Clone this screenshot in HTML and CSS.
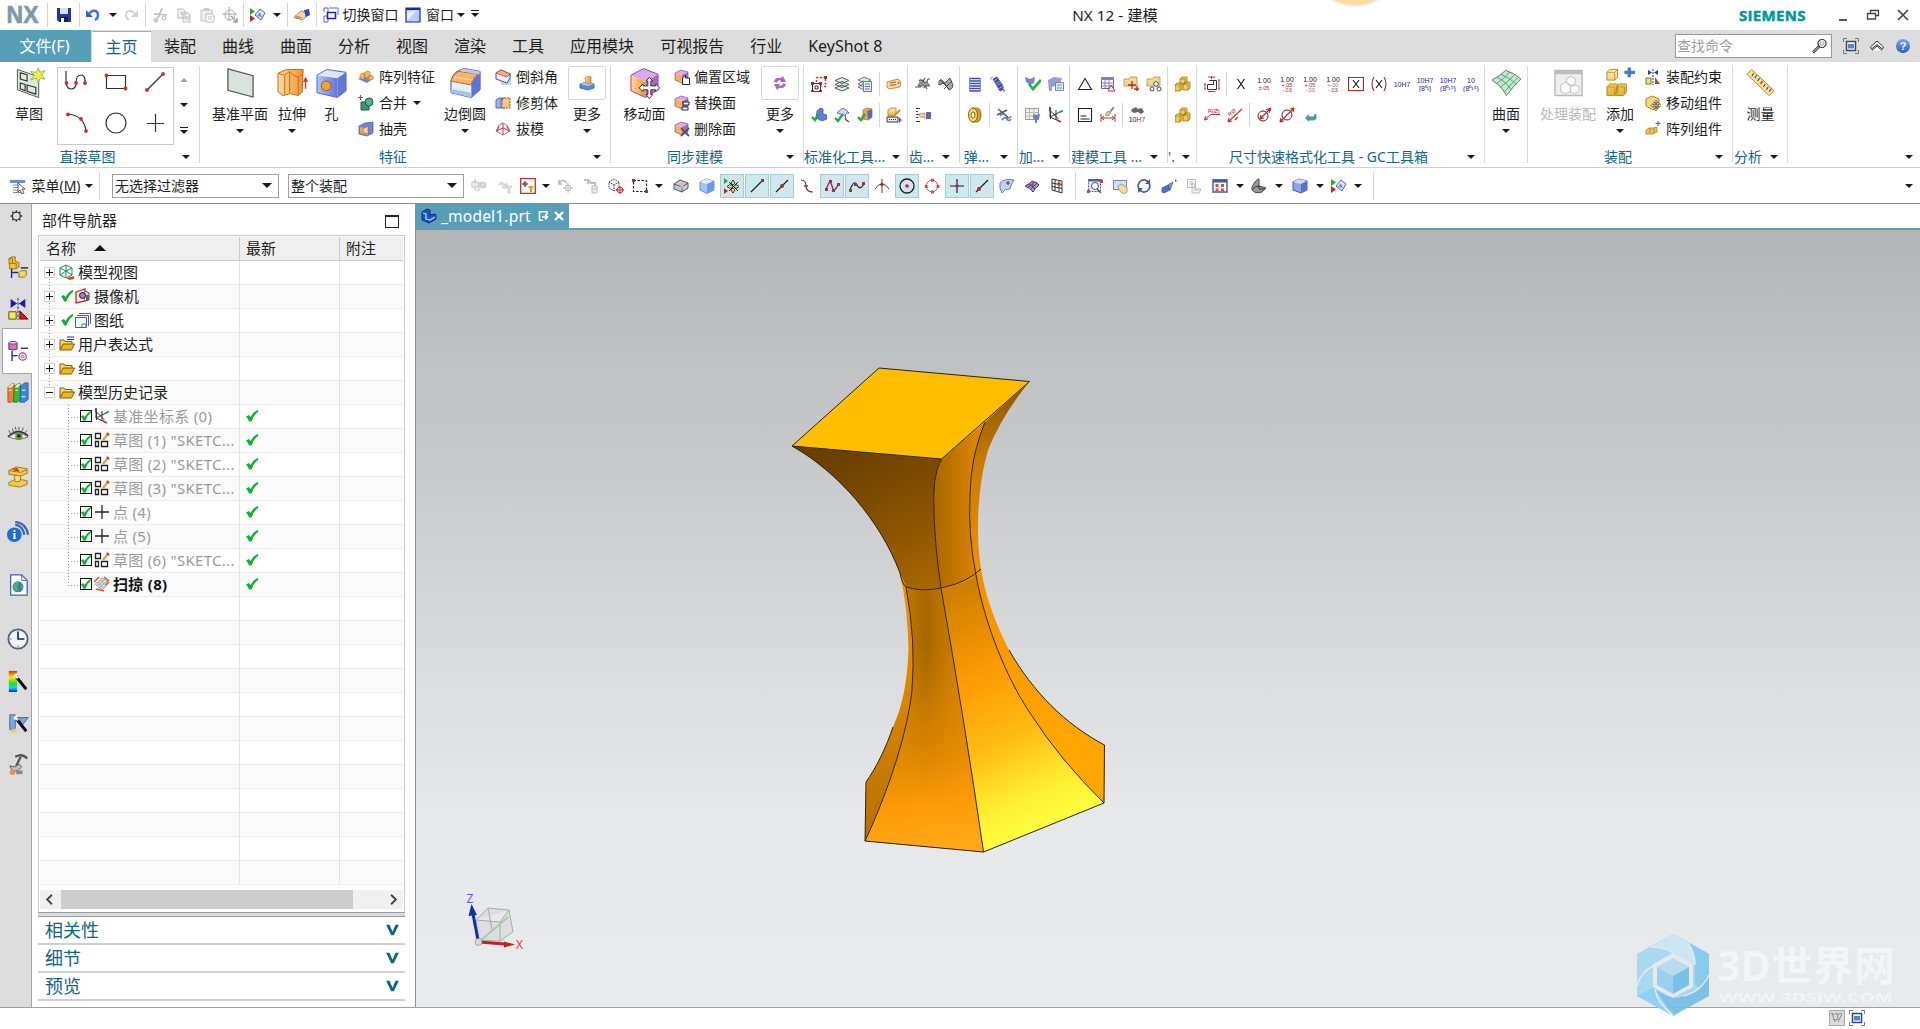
FILE: index.html
```html
<!DOCTYPE html>
<html lang="zh-CN">
<head>
<meta charset="utf-8">
<title>NX 12 - 建模</title>
<link rel="stylesheet" href="styles.css">
</head>
<body>
<svg class="sprite" aria-hidden="true">
  <defs>
    <linearGradient id="gTop" x1="0" y1="0" x2="0" y2="1"><stop offset="0" stop-color="#fff"/><stop offset="1" stop-color="#4e7fe0"/></linearGradient>
    <linearGradient id="gBlue" x1="0" y1="0" x2="1" y2="0"><stop offset="0" stop-color="#a9c6fa"/><stop offset="1" stop-color="#5f78dc"/></linearGradient>
    <linearGradient id="gOr" x1="0" y1="0" x2="1" y2="0"><stop offset="0" stop-color="#ffd89a"/><stop offset="1" stop-color="#f2942c"/></linearGradient>
    <linearGradient id="gYel" x1="0" y1="0" x2="0" y2="1"><stop offset="0" stop-color="#fff0a8"/><stop offset="1" stop-color="#e8b030"/></linearGradient>
    <linearGradient id="gRain" x1="0" y1="0" x2="0" y2="1"><stop offset="0" stop-color="#f02010"/><stop offset=".3" stop-color="#ffe800"/><stop offset=".6" stop-color="#20e020"/><stop offset=".8" stop-color="#10d0ff"/><stop offset="1" stop-color="#1020f0"/></linearGradient>
  </defs>
  <!-- quick access -->
  <symbol id="save" viewBox="0 0 16 16"><path d="M1 1h14v14H3l-2-2z" fill="#2433a8"/><path d="M4 1h8v6H4z" fill="#cfe0f8"/><path d="M4 10h8v5H4z" fill="#222"/><path d="M5 11h3v4H5z" fill="#fff"/></symbol>
  <symbol id="undo" viewBox="0 0 16 16"><path d="M1 3v7h7z" fill="#2f62c8"/><path d="M4 7c3-5 9-4 9 1 0 3-1 4-3 5" fill="none" stroke="#3f74d8" stroke-width="2.4"/></symbol>
  <symbol id="redo" viewBox="0 0 16 16"><path d="M15 3v7H8z" fill="#d4d4d4"/><path d="M12 7C9 2 3 3 3 8c0 3 1 4 3 5" fill="none" stroke="#d4d4d4" stroke-width="2"/></symbol>
  <symbol id="cut" viewBox="0 0 16 16"><path d="M10 1L6 11M2 7l13 1M5 12l-2 3" stroke="#bbb" stroke-width="1.6" fill="none"/><circle cx="12" cy="11" r="2" fill="none" stroke="#bbb"/><circle cx="4" cy="13" r="2" fill="none" stroke="#bbb"/></symbol>
  <symbol id="copy" viewBox="0 0 16 16"><path d="M2 2h5l2 2v7H2zM7 6h5l2 2v7H7z" fill="#f4f4f4" stroke="#bbb"/><path d="M4 5h3M4 7h3M9 10h4M9 12h4" stroke="#bbb"/></symbol>
  <symbol id="paste" viewBox="0 0 16 16"><path d="M2 3h11v11H2z" fill="#eee" stroke="#c4c4c4"/><path d="M5 1h5v3H5z" fill="#ccc"/><path d="M7 7h6l2 2v6H7z" fill="#fff" stroke="#bbb"/><path d="M9 10h4M9 12h4" stroke="#bbb"/></symbol>
  <symbol id="target" viewBox="0 0 16 16"><circle cx="8" cy="8" r="5" fill="none" stroke="#aaa"/><path d="M7 0v14M0 7h15" stroke="#aaa"/><path d="M9 9l6 6M11 15h4v-4" stroke="#999" stroke-width="1.4" fill="none"/></symbol>
  <symbol id="roles" viewBox="0 0 16 16"><path d="M0 1l5 3.500-5 3.500z" fill="#22b422"/><path d="M0 8l5 3.500L0 15z" fill="#d02020"/><path d="M5 8l5-6 5 4-4 7z" fill="#dde4ff" stroke="#5064b8"/><path d="M7 9l3-4 2 5z" fill="#7a8bd8"/></symbol>
  <symbol id="hand" viewBox="0 0 16 16"><path d="M0 10l7-6 4 1 1 5-4 3z" fill="#f6d9a0" stroke="#9a7a50" stroke-width=".8"/><path d="M10 3l5-1 1 6-4 2z" fill="#2c48c0"/><path d="M2 9l6 2M1 11h5" stroke="#8a6a40" stroke-width=".7"/></symbol>
  <symbol id="swwin" viewBox="0 0 16 16"><path d="M6 1h9v7M1 5V1h4v5M1 9h4v6H1z" fill="none" stroke="#5a6cb0"/><path d="M4.500 5.500h8v6h-8z" fill="#fff" stroke="#1428c8" stroke-width="1.600"/></symbol>
  <symbol id="win" viewBox="0 0 16 16"><path d="M1 1h14v14H1z" fill="#b8ccf4" stroke="#1428b8" stroke-width="1.200"/><path d="M2 14V5l10-2z" fill="#fff" opacity=".7"/><path d="M1 1h14v2H1z" fill="#1428b8"/></symbol>
  <symbol id="min" viewBox="0 0 16 16"><path d="M4 13h8" stroke="#444" stroke-width="1.800"/></symbol>
  <symbol id="restore" viewBox="0 0 16 16"><path d="M5.500 6V3.500h8v5H10M2.500 6.500h8v5.500h-8z" fill="none" stroke="#444" stroke-width="1.300"/></symbol>
  <symbol id="close" viewBox="0 0 16 16"><path d="M3 3l10 10M13 3L3 13" stroke="#444" stroke-width="1.700"/></symbol>
  <symbol id="mag" viewBox="0 0 16 16"><circle cx="10" cy="5.500" r="4" fill="none" stroke="#333" stroke-width="1.200"/><circle cx="10" cy="5.500" r="1.800" fill="none" stroke="#777" stroke-width=".7"/><path d="M7 8.500l-6 6" stroke="#333" stroke-width="2.600"/><path d="M6.500 9l-5 5" stroke="#fff" stroke-width=".9"/></symbol>
  <symbol id="full" viewBox="0 0 16 16"><path d="M.5 4V.5H4M12 .5h3.500V4M15.500 12v3.500H12M4 15.500H.5V12" fill="none" stroke="#777"/><path d="M3.500 3.500h9v9h-9z" fill="#fff" stroke="#3c465c" stroke-width="1.500"/><path d="M5 6h6v4.500H5z" fill="#4a86dc"/></symbol>
  <symbol id="chev" viewBox="0 0 16 16"><path d="M1.500 9L8 3l6.500 6-1 2L8 6.500 2.500 11zM3 12.500L8 8l5 4.500" fill="#fff" stroke="#333"/></symbol>
  <!-- large ribbon icons -->
  <symbol id="sketch" viewBox="0 0 32 32"><path d="M3.500 2l22 7.500V31l-22-8z" fill="#dfeade" stroke="#555"/><path d="M6.500 5.500l7 2v6.500l-7-2zM6.500 16l5 1.500v6.500l-5-2zM13.500 18l9 2.500v7l-9-3z" fill="none" stroke="#333" stroke-width="1.200"/><path d="M25 0l2 5 5-2-3 5 3 4-5-1-2 5-2-5-6 2 4-5-4-4 6 1z" fill="#f8ee30" stroke="#5aa0b0" stroke-width=".7"/></symbol>
  <symbol id="plane" viewBox="0 0 32 32"><path d="M3 1.500l26 7v22l-26-7z" fill="#d9e3dc" stroke="#555" stroke-width="1.300"/></symbol>
  <symbol id="extrude" viewBox="0 0 32 32"><path d="M1 6l9-4h17l-1 23-4 4-8-2-8 2-5-4z" fill="url(#gOr)" stroke="#b86a18"/><path d="M1 6l7 2 5-4 4 4 5 2 4-3M8 8v20M13 5v21M22 10v18" fill="none" stroke="#c07020"/><path d="M29.500 22V12M27.500 15l2-4 2 4" stroke="#d03030" fill="none" stroke-width="1.400"/></symbol>
  <symbol id="hole" viewBox="0 0 32 32"><path d="M1 8l10-6 20 3-9 6z" fill="#dbe8fc"/><path d="M1 8l21 3v20L1 26z" fill="url(#gBlue)"/><path d="M22 11l9-6v19l-9 7z" fill="#6478dc"/><path d="M1 8l10-6 20 3v19l-9 7-21-5z" fill="none" stroke="#5264c4"/><circle cx="10.500" cy="19" r="5" fill="#f6a428" stroke="#a05a10"/></symbol>
  <symbol id="blend" viewBox="0 0 32 32"><path d="M1 14Q3 6 9 3l6-2 16 3v19l-9 8-21-5z" fill="#e6effc" stroke="#34469c"/><path d="M1 13Q4 6 9 4l20 3q-6 3-7 11L1 14z" fill="#f8b468" stroke="#d06020"/><path d="M5 10l19 3" stroke="#ffe0b0"/><path d="M9 3l6-2 16 3-3 3z" fill="#b8c8f4"/><path d="M22 18q1-7 9-12v17l-9 8z" fill="#6074d8"/><path d="M1 22l21 4v5L1 26z" fill="#a8c4f4"/></symbol>
  <symbol id="moveface" viewBox="0 0 32 32"><path d="M2 8l13-7 15 6-13 8z" fill="#dcaaec"/><path d="M2 8l15 7v16L2 24z" fill="url(#gOr)"/><path d="M17 15l13-8v16l-13 8z" fill="#a86ac8"/><path d="M2 8l13-7 15 6v16l-13 8L2 24z" fill="none" stroke="#8a4a9a"/><path d="M21 10l3.500 4h-2v5h5v-2l4 4-4 4v-2h-5v5h2L21 32l-3.500-4h2v-5h-5v2l-4-4 4-4v2h5v-5h-2z" fill="#fff" stroke="#333"/></symbol>
  <symbol id="surf" viewBox="0 0 32 32"><path d="M1 13Q9 9 15 3q8 2 16 9-8 7-15 17-5-10-15-16z" fill="#c6e6d2" stroke="#3c8a60"/><path d="M5 17Q13 12 19 5M9 21Q17 15 24 8M13 26q8-9 14-15M6 10q9 4 15 13M10 7q10 4 16 10" fill="none" stroke="#4a9a70" stroke-width=".9"/></symbol>
  <symbol id="procasm" viewBox="0 0 32 32"><path d="M2 3h28v26H2z" fill="#efefef" stroke="#bbb" stroke-width="1.500"/><path d="M2 3h28v4H2z" fill="#bdbdbd"/><path d="M8 18l5-3 5 3v7l-5 2-5-2zM14 11l5-2 4 3v5l-5 2-4-3zM18 20l5-2 4 2v5l-5 2-4-2z" fill="#fafafa" stroke="#c0c0c0"/></symbol>
  <symbol id="addcomp" viewBox="0 0 32 32"><path d="M2 5l3-3h8v8l-3 3H2zM2 20l3-3h8v8l-3 4H2zM12 20l3-3h7v8l-3 4h-8z" fill="url(#gYel)" stroke="#b08828"/><path d="M2 5h8v8M10 5l3-3M2 20h8v8M12 20h8v8" fill="none" stroke="#b08828" stroke-width=".8"/><path d="M25 0v10M20 5h11" stroke="#3d78dc" stroke-width="3.400"/></symbol>
  <symbol id="ruler" viewBox="0 0 32 32"><path d="M7 2L2 7l23 22 5-5z" fill="#f8e28c" stroke="#b08a30"/><path d="M9 6l-2 3M12 8l-2 3M15 11l-2 3M21 17l-2 3M24 20l-2 3M27 22l-2 3" stroke="#3050a0" stroke-width="1.200"/><path d="M18 14l-2 3" stroke="#d02020" stroke-width="1.500"/></symbol>
  <symbol id="pad" viewBox="0 0 16 16"><path d="M1 9l6-2 8 2v4l-6 2-8-2z" fill="#5c8ae0" stroke="#3a58b0" stroke-width=".8"/><path d="M1 9l8 2 6-2-8-2z" fill="#a8c8fa"/><path d="M6 3l3-2 3 1v6q-3 2-5 0z" fill="url(#gOr)" stroke="#c07828" stroke-width=".7"/></symbol>
  <symbol id="swap" viewBox="0 0 16 16"><path d="M2 7q1-5 7-4l2-2 3 6-6 0 1-1.500q-3-1-4 2zM14 9q-1 5-7 4l-2 2-3-6 6 0-1 1.500q3 1 4-2z" fill="#a868c8"/></symbol>
  <!-- gallery -->
  <symbol id="profile" viewBox="0 0 26 26"><path d="M2 2v9q0 9 5 9t5-6q0-8 5-8t4 10" fill="none" stroke="#333" stroke-width="1.200"/><circle cx="2.500" cy="14" r="1.900" fill="#c83030"/><circle cx="12" cy="14" r="1.900" fill="#c83030"/><circle cx="21" cy="14" r="1.900" fill="#c83030"/></symbol>
  <symbol id="rect" viewBox="0 0 26 26"><path d="M3.500 6.500h19v13h-19z" fill="none" stroke="#333" stroke-width="1.200"/><circle cx="3.500" cy="6.500" r="1.900" fill="#c83030"/><circle cx="22.500" cy="19.500" r="1.900" fill="#c83030"/></symbol>
  <symbol id="line" viewBox="0 0 26 26"><path d="M5 21L21 5" stroke="#333" stroke-width="1.200"/><circle cx="5" cy="21" r="1.900" fill="#c83030"/><circle cx="21" cy="5" r="1.900" fill="#c83030"/></symbol>
  <symbol id="arc" viewBox="0 0 26 26"><path d="M3 4q17 1 19 17" fill="none" stroke="#333" stroke-width="1.200"/><circle cx="4" cy="4.500" r="1.900" fill="#c83030"/><circle cx="17" cy="9" r="1.900" fill="#c83030"/><circle cx="22" cy="21" r="1.900" fill="#c83030"/></symbol>
  <symbol id="circ" viewBox="0 0 26 26"><circle cx="13" cy="13" r="10" fill="none" stroke="#333" stroke-width="1.200"/></symbol>
  <symbol id="plus" viewBox="0 0 26 26"><path d="M13.500 4v18M5 13.500h17" stroke="#333" stroke-width="1.200"/></symbol>
  <!-- 16px ribbon icons -->
  <symbol id="patf" viewBox="0 0 16 16"><path d="M0 10l7-3 9 2-7 5z" fill="#5c88e0"/><path d="M2 6l2-2 3 1v4l-3 1-2-1zM6 4l3-2 3 1v5l-3 1-3-1zM10 7l2-1 3 1v3l-3 1-2-1z" fill="#f8b860" stroke="#c8782c" stroke-width=".7"/></symbol>
  <symbol id="unite" viewBox="0 0 16 16"><path d="M3 7h8v8H3z" fill="#3c9474" stroke="#1c5c44"/><circle cx="11" cy="7" r="4" fill="#58b090" stroke="#1c5c44"/><path d="M2.500 0v5M0 2.500h5" stroke="#d02c2c"/></symbol>
  <symbol id="shell" viewBox="0 0 16 16"><path d="M1 5l6-3 8-1v11l-6 3-8-2z" fill="#6c84dc" stroke="#4454a8" stroke-width=".7"/><path d="M2 6l8 2v6l-8-2z" fill="#f6a84c"/><path d="M5 8l5-3v8l-5-2z" fill="#ffd9a0" stroke="#b86820" stroke-width=".7"/></symbol>
  <symbol id="chamfer" viewBox="0 0 16 16"><path d="M6 4h10v12H6z" fill="#bcd4f8"/><path d="M1 4l5-3 9 4v4l-3 5-11-4z" fill="#eef" stroke="#34468c" stroke-width=".9"/><path d="M1 4l11 4 3-3-9-4z" fill="#f4b090" stroke="#c04028" stroke-width=".8"/></symbol>
  <symbol id="trim" viewBox="0 0 16 16"><path d="M1 5l3-2h6v10H1z" fill="url(#gBlue)" stroke="#34468c" stroke-width=".8"/><path d="M7 5l2-2h6v10H7z" fill="#ffc880" stroke="#b04020" stroke-width="1" stroke-dasharray="2 1"/></symbol>
  <symbol id="draft" viewBox="0 0 16 16"><path d="M1 10l3-6 4-2 4 2 3 6-7 4z" fill="#eef2fc" stroke="#68a" stroke-width=".9"/><path d="M1 10l7-3 7 3M8 2v12M4 5l-2 6M12 5l2 6" fill="none" stroke="#d03838" stroke-width="1"/></symbol>
  <symbol id="fbase" viewBox="0 0 16 16"><path d="M1 4l6-3 7 2-6 3z" fill="#dcaaec"/><path d="M1 4l7 2v8l-7-3z" fill="#f8b050"/><path d="M8 6l6-3v8l-6 3z" fill="#a86ac8"/><path d="M1 4l6-3 7 2v8l-6 3-7-3z" fill="none" stroke="#8a4a9a" stroke-width=".7"/></symbol>
  <symbol id="foff" viewBox="0 0 16 16"><use href="#fbase"/><path d="M8.500 15.500V9l3-3v3h4v6.500z" fill="#fff" stroke="#222"/></symbol>
  <symbol id="frep" viewBox="0 0 16 16"><use href="#fbase"/><path d="M9 7h6v3H9zM8 12h6v3H8z" fill="#fff" stroke="#222"/></symbol>
  <symbol id="fdel" viewBox="0 0 16 16"><use href="#fbase"/><path d="M7 7l8 8M15 7l-8 8" stroke="#555" stroke-width="1.800"/></symbol>
  <symbol id="std1" viewBox="0 0 16 16"><path d="M5.500 1.500h9v9h-4M5.500 6V1.500" fill="none" stroke="#c03030" stroke-dasharray="2 1.500" stroke-width="1.500"/><path d="M1.500 7.500h8v8h-8zM4 10h3v3H4z" fill="#fff" stroke="#333"/><path d="M0 6h3v3H0zM8 6h3v3H8zM0 14h3v2H0zM8 14h3v2H8zM13 0h3v3h-3z" fill="#a82828"/></symbol>
  <symbol id="layers" viewBox="0 0 16 16"><path d="M1 12l7-3 7 3-7 3zM1 8.500l7-3 7 3-7 3zM1 4.500l7-3 7 3-7 3z" fill="#dff0e4" stroke="#444" stroke-width=".9"/></symbol>
  <symbol id="layers2" viewBox="0 0 16 16"><path d="M1 11l5-3 6 3-5 3zM1 8l5-3 6 3-5 3zM1 4l6-3 7 3-6 3z" fill="#d4ecdc" stroke="#555" stroke-width=".8"/><path d="M6.500 5.500h8v10h-8z" fill="#e4ecfc" stroke="#667cc0"/><path d="M8 8h5M8 10.500h5M8 13h5" stroke="#667cc0"/></symbol>
  <symbol id="tag" viewBox="0 0 16 16"><path d="M1 6l11-3 3 3-1 5-11 2-2-2z" fill="#fad898" stroke="#b88434" stroke-width=".9"/><path d="M4 7l6-1M4 9.500l6-1" stroke="#a06a24"/><circle cx="12.500" cy="7" r="1" fill="#a06a24"/></symbol>
  <symbol id="ckA" viewBox="0 0 16 16"><path d="M6 4l3-3 3 1v5l4 1v4l-5 2-6-3z" fill="#5c80dc" stroke="#3c50a8" stroke-width=".7"/><path d="M1 10l3 3 4-6" fill="none" stroke="#28a838" stroke-width="2.400"/></symbol>
  <symbol id="ckB" viewBox="0 0 16 16"><path d="M3 6Q8 0 11 2l4 4q-5-1-3 6-1-5-6-5z" fill="#cdd8f6" stroke="#3c50a8" stroke-width=".8"/><path d="M1 11l3 3 5-7" fill="none" stroke="#28a838" stroke-width="2.400"/><path d="M11 12l4 3" stroke="#446" stroke-width="1.300"/></symbol>
  <symbol id="ckC" viewBox="0 0 16 16"><path d="M6 3l4-2 5 1v8l-4 3-5-1z" fill="#f0a838" stroke="#a86c18" stroke-width=".7"/><path d="M10 4l5-2v8l-4 3z" fill="#4c6cd4"/><path d="M1 10l3 3 4-6" fill="none" stroke="#28a838" stroke-width="2.400"/></symbol>
  <symbol id="attr" viewBox="0 0 16 16"><path d="M2 3l3-2h5v6l-2 2H2z" fill="url(#gYel)" stroke="#a08020" stroke-width=".8"/><path d="M1 10h11v5H1z" fill="#eef" stroke="#333"/><path d="M3 12.500h7" stroke="#333" stroke-dasharray="1 1"/><path d="M8 9l6-6" stroke="#d09030" stroke-width="2"/><path d="M13 10l3 3-3 3z" fill="#b040b0"/></symbol>
  <symbol id="gear1" viewBox="0 0 16 16"><path d="M0 11h5l5-9M4 5q2-2 4 0l4 8M9 12l4-9h2" fill="none" stroke="#555" stroke-width="1.200"/><path d="M5 6h7l3 4H3z" fill="#999" stroke="#444" stroke-width=".7"/></symbol>
  <symbol id="gear2" viewBox="0 0 16 16"><path d="M1 5q2-3 4 0l6 9q4-1 4-5l-3-7-4 4-7 3z" fill="#aaa" stroke="#444" stroke-width=".9"/><path d="M2 4l9 9M6 13l8-8" stroke="#333" stroke-width=".8"/></symbol>
  <symbol id="gear3" viewBox="0 0 16 16"><path d="M1 1.500h4M1 4.500h2M1 7.500h3M1 10.500h2M1 14.500h4" stroke="#333" stroke-width="1.200"/><path d="M4 7l6-1v5l-5-1z" fill="#f4c8a0" stroke="#a87850" stroke-width=".6"/><path d="M11 5h5v7h-5z" fill="#5a68b8"/></symbol>
  <symbol id="spring" viewBox="0 0 16 16"><path d="M2.500 2.500h11M2.500 5h11M2.500 7.500h11M2.500 10h11M2.500 12.500h11M2.500 15h11" stroke="#3c4ca8" stroke-width="1.700"/><path d="M2.500 2v13M13.500 2v13" stroke="#7c8ce0"/></symbol>
  <symbol id="spring2" viewBox="0 0 16 16"><path d="M3 3l4-2 6 9q1 4-3 5z" fill="#4454b4" stroke="#2c3884" stroke-width=".8"/><path d="M1 4q-1-3 2-3M4 5l4-3M5 8l5-3M6 10l5-3M8 13l5-3" stroke="#8c98e4" fill="none"/><path d="M12 13q3 0 2 3" fill="none" stroke="#4454b4"/></symbol>
  <symbol id="disc" viewBox="0 0 16 16"><path d="M8 1q6-1 6 7t-6 7H5q4-7 0-14z" fill="#c8a428" stroke="#7c6410" stroke-width=".8"/><ellipse cx="6" cy="8" rx="4.500" ry="7" fill="#f4dc60" stroke="#7c6410"/><ellipse cx="6" cy="8" rx="2" ry="3" fill="#fff" stroke="#7c6410"/></symbol>
  <symbol id="snip" viewBox="0 0 16 16"><path d="M2 2l10 8M1 8l10-5" stroke="#555" stroke-width="1.400"/><path d="M4 9q3-4 6 0t5 0M6 13q3-4 5-1t4 0" fill="none" stroke="#6474c4" stroke-width="1.500"/></symbol>
  <symbol id="mach1" viewBox="0 0 16 16"><path d="M0 1l5 2 5-2-1 6-4 2-4-3z" fill="#7884d0"/><path d="M4 8l4 5 8-9" fill="none" stroke="#28b440" stroke-width="2.800"/></symbol>
  <symbol id="mach2" viewBox="0 0 16 16"><path d="M0 4l6-3 8 1-2 6-8 3v4H1z" fill="#9c9cd4"/><path d="M7.500 6.500h8v8h-8z" fill="#dce8fc" stroke="#6878b8" stroke-width=".9"/><path d="M9 9h5M9 12h5" stroke="#6878b8" stroke-width=".8"/></symbol>
  <symbol id="mach3" viewBox="0 0 16 16"><path d="M.5 1.500h13v11H.5z" fill="#eef8d8" stroke="#999"/><path d="M.5 5.500h13M.5 9h13M4.500 2v10M9 2v10" stroke="#aaa" stroke-width=".8"/><path d="M8 7l3 1 4-1-1 5-2 1v3h-2v-3l-2-2z" fill="#7078d0"/></symbol>
  <symbol id="csys" viewBox="0 0 16 16"><path d="M2 1v9l9 4M2 10l10-5M2.500 4l8 8M2.500 4v8M8 3v10" fill="none" stroke="#333"/><path d="M2 0v4" stroke="#2038d0" stroke-width="1.600"/><path d="M11 5.500l4-2" stroke="#20a040" stroke-width="1.600"/><path d="M9 13l4 2" stroke="#d02828" stroke-width="1.600"/></symbol>
  <symbol id="tri" viewBox="0 0 16 16"><path d="M8 2.500L14.500 13.500h-13z" fill="none" stroke="#222" stroke-width="1.100"/></symbol>
  <symbol id="gridt" viewBox="0 0 16 16"><path d="M1.500 1.500h12v11h-12z" fill="#fff" stroke="#6c5ca4"/><path d="M1 1h13v3H1z" fill="#8c7cc0"/><path d="M5 2v10M9 2v10M2 7h12M2 10h12" stroke="#8c7cc0"/><path d="M11 9l4 6H8z" fill="#fff" stroke="#c83030"/></symbol>
  <symbol id="fold1" viewBox="0 0 16 16"><path d="M1 3h5l2-2h6v9H1z" fill="#ecd890" stroke="#b09840" stroke-width=".8"/><path d="M9 5v8M5 9h8M14 10v5M11 13h5" stroke="#c02020" stroke-width="1.300"/></symbol>
  <symbol id="fold2" viewBox="0 0 16 16"><path d="M1 3h5l2-2h6v9H1z" fill="#ecd890" stroke="#b09840" stroke-width=".8"/><circle cx="10" cy="8" r="2.300" fill="#fff" stroke="#444"/><circle cx="6" cy="13" r="2" fill="#fff" stroke="#444"/><circle cx="13" cy="13" r="2" fill="#fff" stroke="#444"/></symbol>
  <symbol id="note" viewBox="0 0 16 16"><path d="M1.500 1.500h13v13h-13z" fill="#fff" stroke="#222" stroke-width="1.100"/><path d="M3.500 9h6M3.500 12h9" stroke="#222"/></symbol>
  <symbol id="dimfmt" viewBox="0 0 16 16"><path d="M1 7v8M15 7v8M2 11h12M4 9l-2.500 2L4 13M12 9l2.500 2L12 13" fill="none" stroke="#c03030"/><path d="M5 8l3-4 3 2-3 3z" fill="#c8d070" stroke="#777" stroke-width=".6"/><path d="M10 5l4-5" stroke="#888" stroke-width="2"/></symbol>
  <symbol id="cubes" viewBox="0 0 16 16"><path d="M5 3l2-2h5v5l-2 2H5zM0 9l2-2h5v6l-2 2H0zM8 8l2-2h5v6l-2 2H8z" fill="#f0cc50" stroke="#987818" stroke-width=".8"/><path d="M5 3h5v5M0 9h5v6M8 8h5v6" fill="none" stroke="#987818" stroke-width=".7"/></symbol>
  <symbol id="dimx" viewBox="0 0 16 16"><path d="M5.500 4.500h4v4h-6v5h9v-9h-3" fill="none" stroke="#333"/><path d="M4 1h7M7.500 0v3M4 15.500h7M1 8v5M0 8h2M0 13h2M15 4v9M14 4h2M14 13h2" stroke="#c03030"/></symbol>
  <symbol id="X" viewBox="0 0 16 16"><path d="M4.500 3l7 10M11.500 3l-7 10" stroke="#222" stroke-width="1.300"/></symbol>
  <symbol id="Xbox" viewBox="0 0 16 16"><path d="M.5 1.500h15v13H.5z" fill="#fff" stroke="#a82828" stroke-width="1.200"/><path d="M5 4l6 8M11 4l-6 8" stroke="#222" stroke-width="1.200"/></symbol>
  <symbol id="Xpar" viewBox="0 0 16 16"><path d="M3 1Q-1 8 3 15M13 1q4 7 0 14" fill="none" stroke="#a82828" stroke-width="1.100"/><path d="M5 4l6 8M11 4l-6 8" stroke="#222" stroke-width="1.200"/></symbol>
  <symbol id="dia1" viewBox="0 0 16 16"><circle cx="7" cy="9" r="5" fill="none" stroke="#333"/><path d="M3 13L15 1M15 1l-5 2M15 1l-2 5M4 12l1-4M4 12l4-1" fill="none" stroke="#b82828" stroke-width="1.200"/></symbol>
  <symbol id="dia2" viewBox="0 0 16 16"><circle cx="8" cy="8" r="5" fill="none" stroke="#333"/><path d="M1 15L15 1M15 1l-4 1M15 1l-1 4M1 15l4-1M1 15l1-4" fill="none" stroke="#b82828" stroke-width="1.200"/></symbol>
  <symbol id="ret" viewBox="0 0 16 16"><path d="M3 11l4-4v2.500h4q2 0 1-2.500h2q2 6-3 6.500H7V15z" fill="#4c9c9c"/></symbol>
  <symbol id="constr" viewBox="0 0 16 16"><path d="M3 1l4 2.500L3 6zM13 1L9 3.500 13 6z" fill="#3038b0"/><path d="M8 0v16" stroke="#333" stroke-dasharray="2 1"/><path d="M1 9h5v6H1z" fill="#f4e478" stroke="#887020"/><path d="M10 8l5 7h-5z" fill="#d03838"/></symbol>
  <symbol id="movec" viewBox="0 0 16 16"><path d="M1 4l6-3 7 3v8l-6 3-7-4z" fill="#f8d870" stroke="#a88020"/><path d="M11 5l2 2.500h-1.500V10H14V8.500l2 2-2 2V11h-2.500v2.500H13L11 16l-2-2.500h1.500V11H8v1.500l-2-2 2-2V10h2.500V7.500H9z" fill="#fff" stroke="#333" stroke-width=".7"/></symbol>
  <symbol id="patc" viewBox="0 0 16 16"><path d="M1 9l3-2 4 0 4-1v5l-4 2H1z" fill="#f4c458" stroke="#b08428" stroke-width=".8"/><path d="M5 7v5M9 7v5" stroke="#b08428"/><path d="M13 0v5M10.500 2.500h5" stroke="#3870d8" stroke-width="1.200"/></symbol>
  <!-- selection bar -->
  <symbol id="menu" viewBox="0 0 16 16"><path d="M0 2h15v3H0z" fill="#6c8cd4"/><path d="M3 7h6M3 9.500h6M3 12h6M3 14.500h8" stroke="#888"/><path d="M8 5l7 6h-3l2 4-2 1-2-4-2 2z" fill="#fff" stroke="#333" stroke-width=".8"/></symbol>
  <symbol id="g1" viewBox="0 0 16 16"><path d="M1 4h6v5H1zM4 1v11M4 12h4V5h3" fill="none" stroke="#bbb"/><circle cx="12" cy="7" r="3" fill="#ddd" stroke="#c0c0c0"/></symbol>
  <symbol id="g2" viewBox="0 0 16 16"><path d="M1 7q4-6 7 0l2-2v5H5l2-2M9 8h6l-2 3v4h-2v-4z" fill="#ddd" stroke="#c4c4c4" stroke-width=".7"/></symbol>
  <symbol id="filt" viewBox="0 0 16 16"><path d="M.7.700h14.600v14.600H.7z" fill="#fff" stroke="#c03030" stroke-width="1.300"/><path d="M5 3v6M2 6h6" stroke="#333"/><circle cx="5" cy="6" r="1.800" fill="none" stroke="#555" stroke-width=".7"/><path d="M8 8h6l-2 3v3h-2v-3z" fill="#e8a020"/></symbol>
  <symbol id="g3" viewBox="0 0 16 16"><path d="M1 5q4-5 8 0M1 2v4h3" fill="none" stroke="#b4b4b4" stroke-width="1.400"/><circle cx="10" cy="10" r="3" fill="none" stroke="#bbb"/><path d="M10 5v10M5 10h10" stroke="#bbb"/></symbol>
  <symbol id="g4" viewBox="0 0 16 16"><path d="M1 2h4l3 3h4v3M5 2v4" fill="none" stroke="#bbb" stroke-width="1.800"/><path d="M9 8h5v7H9zM9 11h5" fill="#eee" stroke="#bbb"/></symbol>
  <symbol id="selc" viewBox="0 0 16 16"><path d="M1 4l5-3 5 3v6l-5 3-5-3zM1 4l5 3 5-3M6 7v6" fill="none" stroke="#333" stroke-dasharray="1.500 1"/><circle cx="12" cy="12" r="2.800" fill="#fff" stroke="#b82828"/><path d="M12 8v8M8 12h8" stroke="#b82828"/></symbol>
  <symbol id="marq" viewBox="0 0 16 16"><path d="M1.500 2.500h13v11h-13z" fill="none" stroke="#222" stroke-dasharray="2.500 1.500" stroke-width="1.200"/><path d="M0 1h3v3H0zM13 12h3v3h-3z" fill="#b82828"/></symbol>
  <symbol id="body1" viewBox="0 0 16 16"><path d="M1 6l6-4 8 3v5l-6 4-8-3z" fill="#c4ccd8" stroke="#555"/><path d="M1 6l8 3 6-4M9 9v5" fill="none" stroke="#556"/><path d="M6 6l6-2-3 7z" fill="#e8b0b0"/></symbol>
  <symbol id="body2" viewBox="0 0 16 16"><path d="M1 4l6-3 8 2v9l-7 3.500-7-3.500z" fill="#a4c4f8" stroke="#5a70c8" stroke-width=".8"/><path d="M1 4l7 2 7-3-8-2z" fill="#e4effc"/><path d="M8 6v9l7-3V3z" fill="#689ce8"/></symbol>
  <symbol id="snap" viewBox="0 0 16 16"><path d="M0 0l4 3-4 3z" fill="#20a830"/><path d="M0 10l4 3-4 3z" fill="#d02020"/><path d="M9 2l2 3-2 2-2-2zM9 15l2-3-2-2-2 2zM3 8.500l3-2 2 2-2 2zM15 8.500l-3-2-2 2 2 2z" fill="#f4e468" stroke="#222" stroke-width=".9"/><path d="M5 4l9 9M14 4l-9 9" stroke="#222"/></symbol>
  <symbol id="s1" viewBox="0 0 16 16"><path d="M2 14L14 2" stroke="#222" stroke-width="1.200"/><path d="M12 1h3v3h-3z" fill="#c02828"/></symbol>
  <symbol id="s2" viewBox="0 0 16 16"><path d="M2 14L14 2" stroke="#222" stroke-width="1.200"/><circle cx="8" cy="8" r="2" fill="#c02828"/></symbol>
  <symbol id="s3" viewBox="0 0 16 16"><path d="M2 2q5 0 5 6t7 6" fill="none" stroke="#444" stroke-width="1.200"/><path d="M5 8h4" stroke="#c02828" stroke-width="1.500"/></symbol>
  <symbol id="s4" viewBox="0 0 16 16"><path d="M2 11L6 3l4 10 5-7" fill="none" stroke="#8030a0" stroke-width="1.400"/><path d="M1 10h3v3H1zM5 2h3v3H5zM8 11h3v3H8zM13 5h3v3h-3z" fill="#c02828"/></symbol>
  <symbol id="s5" viewBox="0 0 16 16"><path d="M1 12Q5 1 8 7t7-1" fill="none" stroke="#333" stroke-width="1.300"/><path d="M0 11h3v3H0zM5 5h3v3H5zM13 4h3v3h-3z" fill="#c02828"/></symbol>
  <symbol id="s6" viewBox="0 0 16 16"><path d="M8 1v14M1 11Q4 6 8 6t7 5" fill="none" stroke="#444"/><circle cx="8" cy="6.500" r="1.800" fill="#c02828"/></symbol>
  <symbol id="s7" viewBox="0 0 16 16"><circle cx="8" cy="8" r="7" fill="none" stroke="#222" stroke-width="1.300"/><circle cx="8" cy="8" r="1.800" fill="#c02828"/></symbol>
  <symbol id="s8" viewBox="0 0 16 16"><circle cx="8" cy="8" r="5.800" fill="none" stroke="#777"/><path d="M7 .8h3v3H7zM7 12.500h3v3H7zM.7 7h3v3H.7zM12.500 7h3v3h-3z" fill="#d05050"/></symbol>
  <symbol id="s9" viewBox="0 0 16 16"><path d="M8 1v14M1 8h14" stroke="#222" stroke-width="1.200"/><circle cx="8" cy="8" r="1.800" fill="#c02828"/></symbol>
  <symbol id="s10" viewBox="0 0 16 16"><path d="M2 14L14 2" stroke="#222" stroke-width="1.200"/><circle cx="5" cy="11" r="2" fill="#c02828"/></symbol>
  <symbol id="s11" viewBox="0 0 16 16"><path d="M1 5q5-5 14-3-3 4-4 9-5-1-8 4-3-5-2-10z" fill="#bcd4f4" stroke="#5c7cc0"/><circle cx="9" cy="5" r="1.800" fill="#d03030"/></symbol>
  <symbol id="s12" viewBox="0 0 16 16"><path d="M1 8q5-2 7-5 5 1 7 4-4 3-6 7-3-4-8-6z" fill="#a09cd8" stroke="#3c3c70"/><path d="M3 10q5-3 7-6M6 12q4-4 7-7M4 6q5 2 7 5" fill="none" stroke="#3c3c70"/><circle cx="8" cy="7" r="1.600" fill="#d03030"/></symbol>
  <symbol id="s13" viewBox="0 0 16 16"><path d="M3 1l10 2v12L3 12zM6 2v11M10 3v11M3 5l10 2M3 8.500l10 2" fill="none" stroke="#333"/><circle cx="10" cy="6" r="1.800" fill="#d03030"/></symbol>
  <symbol id="v1" viewBox="0 0 16 16"><path d="M1.500 2.500h12v11h-12z" fill="#e4ecfc" stroke="#4860c0" stroke-dasharray="2 1"/><path d="M1 1h14v2.500H1z" fill="#4860c0"/><circle cx="8" cy="8" r="3.500" fill="#fff" stroke="#555"/><path d="M10 11l4 4" stroke="#555" stroke-width="1.500"/><path d="M13 2h3v3h-3zM0 12h3v3H0z" fill="#d04040"/></symbol>
  <symbol id="v2" viewBox="0 0 16 16"><path d="M1.500 2.500h13v9h-13z" fill="#cfe2fa" stroke="#6c84c8"/><path d="M6 8l3-2 6 3v5l-4 2-4-4z" fill="#f4d8a8" stroke="#b08850" stroke-width=".8"/></symbol>
  <symbol id="v3" viewBox="0 0 16 16"><path d="M3 11A6 6 0 0 1 9 2l4 2M13 5a6 6 0 0 1-6 9l-4-2" fill="none" stroke="#4454b0" stroke-width="1.600"/><path d="M14 1v5H9zM2 15v-5h5z" fill="#4454b0"/></symbol>
  <symbol id="v4" viewBox="0 0 16 16"><path d="M1 10l6-3 2 5-6 3-2-1z" fill="#5070d8" stroke="#3048a0" stroke-width=".7"/><path d="M7 7l5-3-3 8z" fill="#8098e8" stroke="#3048a0" stroke-width=".7"/><path d="M14 1l2 2-2 1z" fill="#d03030"/></symbol>
  <symbol id="v5" viewBox="0 0 16 16"><path d="M1.500 1.500h8v8h-8zM6 6h3v5h6l-2 4H6z" fill="#f4f4f4" stroke="#bbb"/><path d="M4 4h3M4 6h3M8 12h5" stroke="#bbb"/></symbol>
  <symbol id="v6" viewBox="0 0 16 16"><path d="M1 2h14v12H1z" fill="#fff" stroke="#3c54b8" stroke-width="1.400"/><path d="M1 1.500h14v3H1z" fill="#3c54b8"/><path d="M3.500 6h3v3h-3zM9 6h3v3H9zM3.500 10.500h3v2.500h-3zM9 10.500h3v2.500H9z" fill="#d05040"/></symbol>
  <symbol id="v7" viewBox="0 0 16 16"><path d="M1 9q4-8 7-8v7l7 2-4 4q-7 2-10-2z" fill="#999" stroke="#444"/><path d="M8 8q-4 0-6 3M8 8v3l6 0" fill="none" stroke="#333"/></symbol>
  <symbol id="v8" viewBox="0 0 16 16"><path d="M1 4l6-3 8 2v9l-6 3-8-3z" fill="#8fa4ec" stroke="#4454a8"/><path d="M1 4l8 2 6-3-8-2z" fill="#cdd8fa"/><path d="M9 6v9l6-3V3z" fill="#5c70d0"/></symbol>
  <!-- resource bar -->
  <symbol id="gearw" viewBox="0 0 24 24"><circle cx="10" cy="12" r="4.800" fill="none" stroke="#333" stroke-width="1.500"/><path d="M10 5v2M10 17v2M3 12h2M15 12h2M5 7l1.500 1.500M13.500 15.500L15 17M15 7l-1.500 1.500M6.500 15.500L5 17" stroke="#333" stroke-width="1.600"/></symbol>
  <symbol id="r1" viewBox="0 0 24 24"><path d="M2 3l3-2h4v5l4 1v5l-3 2H3z" fill="#f4c430" stroke="#907010"/><path d="M2 3h4v5h4v5M6 8h-4" fill="none" stroke="#907010"/><path d="M15 13h8" stroke="#222" stroke-width="1.500"/><path d="M5 14v10M5 18h7" stroke="#1c2890" stroke-width="1.500"/><path d="M13 18l2-2h6v5l-2 2h-6z" fill="#f8d860" stroke="#907010"/></symbol>
  <symbol id="r2" viewBox="0 0 24 24"><path d="M4 1l7 5-7 5zM20 1l-7 5 7 5z" fill="#1818c0"/><path d="M12 0v24" stroke="#222" stroke-dasharray="3 1.500"/><path d="M2 15h8v8H2z" fill="#fce840" stroke="#444"/><path d="M14 14l9 9h-9z" fill="#d81818" stroke="#600"/></symbol>
  <symbol id="r3" viewBox="0 0 24 24"><path d="M2 3q4-2 9 0v7q-5 2-9 0z" fill="#c878b0" stroke="#702060"/><ellipse cx="6.500" cy="3" rx="4.500" ry="1.500" fill="#f0c8e4" stroke="#702060" stroke-width=".8"/><path d="M15 9h8" stroke="#333" stroke-width="1.500"/><path d="M5.500 12v11M5.500 17h6" stroke="#1c2890" stroke-width="1.500"/><circle cx="17" cy="18" r="4" fill="none" stroke="#a04080" stroke-width="1.300"/><circle cx="17" cy="18" r="1.500" fill="none" stroke="#a04080"/></symbol>
  <symbol id="r4" viewBox="0 0 24 24"><path d="M1 6l4-4h3v17l-3 3H1z" fill="#e88030" stroke="#994010" stroke-width=".8"/><path d="M8 5l4-3h3v17l-4 3H7z" fill="#38b838" stroke="#186818" stroke-width=".8"/><path d="M15 5l4-4h4v18l-4 3h-5z" fill="#3c88e0" stroke="#184890" stroke-width=".8"/><path d="M1 6l4-4h3L5 6zM8 6l4-4h3l-3 4z" fill="#f8e8c0"/><path d="M2 9h3M9 9h3M16 9h4M16 16h4" stroke="#fff"/></symbol>
  <symbol id="r5" viewBox="0 0 24 24"><path d="M1 14Q12 3 23 13" fill="none" stroke="#333" stroke-width="1.800"/><path d="M2 14q10-8 21 0-11 5-21 0z" fill="#eee" stroke="#666"/><circle cx="13" cy="13.500" r="4" fill="#60a030"/><circle cx="13" cy="13" r="1.800" fill="#222"/><path d="M4 11L2 7M7 9L6 5M10 7L9 3M13 7V3M16 8l2-4M19 10l3-3" stroke="#555"/></symbol>
  <symbol id="r6" viewBox="0 0 24 24"><path d="M2 5l8-4 12 2v5l-7 3-13-2zM2 18l8-4 12 2v4l-8 3-12-2z" fill="#f4c848" stroke="#a87818"/><path d="M8 10l7 1-1 6H9z" fill="#f8dc80" stroke="#a87818"/><path d="M2 5l13 2 7-3" fill="none" stroke="#a87818"/><path d="M6 3l4 2M9 2l4 4M7 6l5-3" fill="none" stroke="#d02820" stroke-width="1.300"/></symbol>
  <symbol id="r8" viewBox="0 0 24 24"><path d="M4 1h12l6 6v16H4z" fill="#fff" stroke="#3468b8" stroke-width="1.400"/><path d="M16 1v6h6" fill="none" stroke="#3468b8"/><circle cx="12" cy="14" r="6" fill="#3878c8"/><path d="M7 12q3-5 6-3l-2 6 2 4q-6 0-6-7zM15 11l3 3-2 4z" fill="#50b848"/></symbol>
  <symbol id="r9" viewBox="0 0 24 24"><circle cx="12" cy="12" r="10.500" fill="#f0f4fc" stroke="#586078" stroke-width="2"/><path d="M12 4v8h7" fill="none" stroke="#1c2848" stroke-width="1.800"/><path d="M12 3v2M12 19v2M3 12h2" stroke="#586078"/></symbol>
  <symbol id="r10" viewBox="0 0 24 24"><path d="M2 1h9v23H2z" fill="url(#gRain)"/><path d="M9 6l12 15" stroke="#111" stroke-width="3.200"/><path d="M8 5l4 4M11 4l-3 4" stroke="#fff" stroke-width="2.500"/></symbol>
  <symbol id="r11" viewBox="0 0 24 24"><path d="M3 3h6v16H3zM12 6h11l-6 8z" fill="#78a8e0" stroke="#3868b0"/><path d="M2 20l7-2 3 3-6 2z" fill="#e8d060"/><path d="M9 6l12 15" stroke="#111" stroke-width="3.200"/><path d="M8 5l4 4M11 4l-3 4" stroke="#fff" stroke-width="2.500"/></symbol>
  <symbol id="r12" viewBox="0 0 24 24"><path d="M9 3q8-4 13 2M15 3l-5 10" stroke="#555" stroke-width="2.500" fill="none"/><path d="M3 13l6 1 4-3 3 3-4 4-6 1z" fill="#b8c0cc" stroke="#556"/><circle cx="6" cy="20" r="3" fill="#f09028"/><path d="M10 18h7v4h-7z" fill="#888"/></symbol>
  <!-- tree -->
  <symbol id="ok" viewBox="0 0 14 14"><path d="M1 7.500l3-1.500 1.500 2Q8 3 13 .8L13 3Q8 7 6.500 12.500H4Q3 9.500 1 7.500z" fill="#18b030"/></symbol>
  <symbol id="mview" viewBox="0 0 16 16"><path d="M1 4l6-3 6 3v7l-6 3-6-3zM1 4l6 3 6-3M7 7v7M7 1v6l6 4M7 7l-6 4" fill="none" stroke="#188858"/><path d="M8 14l7-2v3l-5 1z" fill="#e04020"/></symbol>
  <symbol id="cam" viewBox="0 0 16 16"><path d="M1 4l9-3v12l-9 2z" fill="#fce8e4" stroke="#d02818" stroke-width="1.300"/><path d="M10 3l4 2v7l-4 1" fill="#ddd" stroke="#444"/><circle cx="7.500" cy="7.500" r="3" fill="#8890c8" stroke="#304"/><path d="M11 7h3v5h-3z" fill="#666"/></symbol>
  <symbol id="draw" viewBox="0 0 16 16"><path d="M4 1.500h11.500V12M2 3.500h11.500V14" fill="none" stroke="#4460a8"/><path d="M.5 5.500h11v10H.5z" fill="#f2f6ff" stroke="#4460a8"/><path d="M7 12h4v3M7 12v3" stroke="#4460a8" fill="none" stroke-width=".8"/></symbol>
  <symbol id="folder" viewBox="0 0 16 16"><path d="M1 14V4h4l1 1.500h7V8" fill="#f8d868" stroke="#785c10"/><path d="M1 14L4 8h11.500l-3 6z" fill="#f4b41c" stroke="#785c10"/></symbol>
  <symbol id="folderx" viewBox="0 0 16 16"><use href="#folder"/><path d="M8 1h7M8 3.500h7" stroke="#2028a0" stroke-width="1.200"/></symbol>
  <symbol id="sk" viewBox="0 0 16 16"><path d="M1.500 1.500h5v5h-5zM1.500 9.500h3v5h-3zM7.500 9.500h6v5h-6z" fill="none" stroke="#222" stroke-width="1.300"/><path d="M9 8l5-6" stroke="#e8a030" stroke-width="2.200"/><path d="M13 1l2 2" stroke="#c03030" stroke-width="2"/></symbol>
  <symbol id="pt" viewBox="0 0 16 16"><path d="M8 1v14M1 8h14" stroke="#222" stroke-width="1.300"/></symbol>
  <symbol id="sweep" viewBox="0 0 16 16"><path d="M1 8q4-1 6-6l7 2q-1 7-6 10z" fill="#ddd" stroke="#888" stroke-width=".7"/><path d="M0 6l5-5M2 13l8 2M10 1l5 4M12 9l3-3" stroke="#e05030" stroke-width="1.500"/><path d="M3 10l8-7M5 12l8-7M4 6l6 7M7 4l5 6" stroke="#999" stroke-width=".8"/></symbol>
  <symbol id="prt" viewBox="0 0 16 16"><path d="M1 4l5-3 3 1v5l5-1 1 1v4l-7 4-7-3z" fill="#1c50c8" stroke="#103080"/><path d="M2 5l3 1 0 5 4 1 5-3" fill="none" stroke="#b8d8ff" stroke-width="1.200"/></symbol>
  <symbol id="page" viewBox="0 0 12 12"><path d="M10 4.500V1.800H2.500v8.400H6M5 7h5M8 4.500l2.500 2.500L8 9.500" fill="none" stroke="#fff" stroke-width="1.500"/></symbol>
  <symbol id="xx" viewBox="0 0 12 12"><path d="M2 2l8 8M10 2l-8 8" stroke="#fff" stroke-width="2.400"/></symbol>
  <symbol id="vchev" viewBox="0 0 16 14"><path d="M.5 1h4L8 9l3.500-8h4L9.500 13h-3z" fill="#10647c"/></symbol>
  <symbol id="flag" viewBox="0 0 16 16"><path d="M.5.500h15v15H.5z" fill="#dcdcdc" stroke="#a8a8a8"/><path d="M3 4l3 8M2 3q4 3 6 0l1 6q-3 2-5 0M9 12l4-8q-2-2-4 1" fill="none" stroke="#888"/></symbol>
</svg>

<header class="title">
  <div class="quick">
    <b class="nx">NX</b><i class="sep"></i><svg class="i"><use href="#save"/></svg><i class="sep"></i>
    <svg class="i"><use href="#undo"/></svg><i class="car"></i><svg class="i"><use href="#redo"/></svg><i class="sep"></i>
    <svg class="i"><use href="#cut"/></svg><svg class="i"><use href="#copy"/></svg><svg class="i"><use href="#paste"/></svg><svg class="i"><use href="#target"/></svg><i class="sep"></i>
    <svg class="i"><use href="#roles"/></svg><i class="car"></i><i class="sep"></i><svg class="i"><use href="#hand"/></svg><i class="sep"></i>
    <svg class="i"><use href="#swwin"/></svg><span>切换窗口</span><svg class="i"><use href="#win"/></svg><span>窗口</span><i class="car"></i><i class="car bar"></i>
  </div>
  <div class="caption">NX 12 - 建模</div>
  <div class="brand">SIEMENS</div>
  <div class="winbtns"><svg class="i"><use href="#min"/></svg><svg class="i"><use href="#restore"/></svg><svg class="i"><use href="#close"/></svg></div>
  <div class="sun"></div>
</header>

<nav class="tabs">
  <span class="file">文件(F)</span><span class="on">主页</span>
  <span>装配</span><span>曲线</span><span>曲面</span><span>分析</span><span>视图</span><span>渲染</span><span>工具</span><span>应用模块</span><span>可视报告</span><span>行业</span><span>KeyShot 8</span>
  <div class="find"><span>查找命令</span><svg class="i"><use href="#mag"/></svg></div>
  <div class="tabtools"><svg class="i"><use href="#full"/></svg><svg class="i"><use href="#chev"/></svg><span class="help">?</span></div>
</nav>

<section class="ribbon">
  <div class="grp w-sketch">
    <div class="body">
      <div class="big"><svg class="L"><use href="#sketch"/></svg><span>草图</span></div>
      <div class="gallery"><svg><use href="#profile"/></svg><svg><use href="#rect"/></svg><svg><use href="#line"/></svg><svg><use href="#arc"/></svg><svg><use href="#circ"/></svg><svg><use href="#plus"/></svg></div>
      <div class="scroll"><i class="car up"></i><i class="car"></i><i class="car bar"></i></div>
    </div>
    <div class="foot"><span>直接草图</span><i class="car"></i></div>
  </div>
  <div class="grp w-feat">
    <div class="body">
      <div class="big"><svg class="L"><use href="#plane"/></svg><span>基准平面</span><i class="car"></i></div>
      <div class="big"><svg class="L"><use href="#extrude"/></svg><span>拉伸</span><i class="car"></i></div>
      <div class="big"><svg class="L"><use href="#hole"/></svg><span>孔</span></div>
      <div class="list"><p><svg class="i"><use href="#patf"/></svg>阵列特征</p><p><svg class="i"><use href="#unite"/></svg>合并<i class="car"></i></p><p><svg class="i"><use href="#shell"/></svg>抽壳</p></div>
      <div class="big"><svg class="L"><use href="#blend"/></svg><span>边倒圆</span><i class="car"></i></div>
      <div class="list"><p><svg class="i"><use href="#chamfer"/></svg>倒斜角</p><p><svg class="i"><use href="#trim"/></svg>修剪体</p><p><svg class="i"><use href="#draft"/></svg>拔模</p></div>
      <div class="big more"><div><svg class="i"><use href="#pad"/></svg></div><span>更多</span><i class="car"></i></div>
    </div>
    <div class="foot"><span>特征</span><i class="car"></i></div>
  </div>
  <div class="grp w-sync">
    <div class="body">
      <div class="big"><svg class="L"><use href="#moveface"/></svg><span>移动面</span></div>
      <div class="list"><p><svg class="i"><use href="#foff"/></svg>偏置区域</p><p><svg class="i"><use href="#frep"/></svg>替换面</p><p><svg class="i"><use href="#fdel"/></svg>删除面</p></div>
      <div class="big more"><div><svg class="i"><use href="#swap"/></svg></div><span>更多</span><i class="car"></i></div>
    </div>
    <div class="foot"><span>同步建模</span><i class="car"></i></div>
  </div>
  <div class="grp w104">
    <div class="mini"><p><svg class="i"><use href="#std1"/></svg><svg class="i"><use href="#layers"/></svg><svg class="i"><use href="#layers2"/></svg><i class="sep"></i><svg class="i"><use href="#tag"/></svg></p>
    <p><svg class="i"><use href="#ckA"/></svg><svg class="i"><use href="#ckB"/></svg><svg class="i"><use href="#ckC"/></svg><i class="sep"></i><svg class="i"><use href="#attr"/></svg></p></div>
    <div class="foot"><span>标准化工具...</span><i class="car"></i></div>
  </div>
  <div class="grp w52">
    <div class="mini"><p><svg class="i"><use href="#gear1"/></svg><svg class="i"><use href="#gear2"/></svg></p><p><svg class="i"><use href="#gear3"/></svg></p></div>
    <div class="foot"><span>齿...</span><i class="car"></i></div>
  </div>
  <div class="grp w58">
    <div class="mini"><p><svg class="i"><use href="#spring"/></svg><svg class="i"><use href="#spring2"/></svg></p><p><svg class="i"><use href="#disc"/></svg><i class="sep"></i><svg class="i"><use href="#snip"/></svg></p></div>
    <div class="foot"><span>弹...</span><i class="car"></i></div>
  </div>
  <div class="grp w52">
    <div class="mini"><p><svg class="i"><use href="#mach1"/></svg><svg class="i"><use href="#mach2"/></svg></p><p><svg class="i"><use href="#mach3"/></svg><svg class="i"><use href="#csys"/></svg></p></div>
    <div class="foot"><span>加...</span><i class="car"></i></div>
  </div>
  <div class="grp w98">
    <div class="mini"><p><svg class="i"><use href="#tri"/></svg><svg class="i"><use href="#gridt"/></svg><svg class="i"><use href="#fold1"/></svg><svg class="i"><use href="#fold2"/></svg></p><p><svg class="i"><use href="#note"/></svg><svg class="i"><use href="#dimfmt"/></svg><i class="sep"></i><svg class="i" viewBox="0 0 16 16"><path d="M3 2l4-2 2 2 4-1 2 4-3 2-3-2-4 1-3-2z" fill="#666"/><text x="8" y="15" class="t dark">10<tspan class="red">H7</tspan></text></svg></p></div>
    <div class="foot"><span>建模工具 ...</span><i class="car"></i></div>
  </div>
  <div class="grp w29">
    <div class="mini"><p><svg class="i"><use href="#cubes"/></svg></p><p><svg class="i"><use href="#cubes"/></svg></p></div>
    <div class="foot"><span>'.</span><i class="car"></i></div>
  </div>
  <div class="grp w288">
    <div class="mini"><p><svg class="i"><use href="#dimx"/></svg><i class="sep"></i><svg class="i"><use href="#X"/></svg><svg class="i" viewBox="0 0 16 16"><text x="8" y="7" class="t dark">1.00</text><text x="8" y="14" class="s red">±.05</text></svg><svg class="i" viewBox="0 0 16 16"><text x="8" y="6" class="t dark">1.00</text><text x="8" y="11" class="s red">+.05</text><text x="8" y="16" class="s red">-.03</text></svg><svg class="i" viewBox="0 0 16 16"><text x="8" y="6" class="t dark">1.00</text><text x="8" y="11" class="s red">+.05</text><text x="8" y="16" class="s grey">-.00</text></svg><svg class="i" viewBox="0 0 16 16"><text x="8" y="6" class="t dark">1.00</text><text x="8" y="11" class="s grey">+.00</text><text x="8" y="16" class="s red">-.03</text></svg><svg class="i"><use href="#Xbox"/></svg><svg class="i"><use href="#Xpar"/></svg><svg class="i" viewBox="0 0 16 16"><text x="8" y="11" class="t blue">10H7</text></svg><svg class="i" viewBox="0 0 16 16"><text x="8" y="7" class="t blue">10H7</text><text x="8" y="15" class="t blue">[8⁰¹]</text></svg><svg class="i" viewBox="0 0 16 16"><text x="8" y="7" class="t blue">10H7</text><text x="8" y="15" class="t blue">(8⁰¹⁵)</text></svg><svg class="i" viewBox="0 0 16 16"><text x="8" y="7" class="t blue">10</text><text x="8" y="15" class="t blue">(8⁰¹⁵)</text></svg></p><p><svg class="i" viewBox="0 0 16 16"><path d="M0 13l7-5.500h9M0 13l4-1M0 13l2-4" fill="none" stroke="#c03030"/><text x="10" y="6" class="s red">R(Ø)</text></svg><svg class="i" viewBox="0 0 16 16"><path d="M1 15L15 2M1 15l4-1M1 15l1-4M8 13l3-3" fill="none" stroke="#c03030" stroke-width="1.200"/><text x="6" y="7" class="s red" transform="rotate(-38 6 7)">RØ</text></svg><i class="sep"></i><svg class="i"><use href="#dia1"/></svg><svg class="i"><use href="#dia2"/></svg><svg class="i"><use href="#ret"/></svg></p></div>
    <div class="foot"><span>尺寸快速格式化工具 - GC工具箱</span><i class="car"></i></div>
  </div>
  <div class="grp w43">
    <div class="body"><div class="big"><svg class="L"><use href="#surf"/></svg><span>曲面</span><i class="car"></i></div></div>
    <div class="foot"></div>
  </div>
  <div class="grp w-asm">
    <div class="body">
      <div class="big off"><svg class="L"><use href="#procasm"/></svg><span>处理装配</span></div>
      <div class="big"><svg class="L"><use href="#addcomp"/></svg><span>添加</span><i class="car"></i></div>
      <div class="list"><p><svg class="i"><use href="#constr"/></svg>装配约束</p><p><svg class="i"><use href="#movec"/></svg>移动组件</p><p><svg class="i"><use href="#patc"/></svg>阵列组件</p></div>
    </div>
    <div class="foot"><span>装配</span><i class="car"></i></div>
  </div>
  <div class="grp w55">
    <div class="body"><div class="big"><svg class="L"><use href="#ruler"/></svg><span>测量</span></div></div>
    <div class="foot"><span>分析</span><i class="car"></i></div>
  </div>
  <div class="grp rest"><div class="foot"><i class="car"></i></div></div>
</section>

<section class="selbar">
  <svg class="i"><use href="#menu"/></svg><span>菜单(<u>M</u>)</span><i class="car"></i><i class="sep"></i>
  <div class="combo c1"><span>无选择过滤器</span><i class="car big-c"></i></div>
  <div class="combo c2"><span>整个装配</span><i class="car big-c"></i></div>
  <svg class="i"><use href="#g1"/></svg><svg class="i"><use href="#g2"/></svg><svg class="i"><use href="#filt"/></svg><i class="car"></i>
  <svg class="i"><use href="#g3"/></svg><svg class="i"><use href="#g4"/></svg><svg class="i"><use href="#selc"/></svg><svg class="i"><use href="#marq"/></svg><i class="car"></i>
  <svg class="i"><use href="#body1"/></svg><svg class="i"><use href="#body2"/></svg>
  <svg class="i hl"><use href="#snap"/></svg><svg class="i hl"><use href="#s1"/></svg><svg class="i hl"><use href="#s2"/></svg><svg class="i"><use href="#s3"/></svg><svg class="i hl"><use href="#s4"/></svg><svg class="i hl"><use href="#s5"/></svg><svg class="i"><use href="#s6"/></svg><svg class="i hl"><use href="#s7"/></svg><svg class="i"><use href="#s8"/></svg><svg class="i hl"><use href="#s9"/></svg><svg class="i hl"><use href="#s10"/></svg><svg class="i"><use href="#s11"/></svg><svg class="i"><use href="#s12"/></svg><svg class="i"><use href="#s13"/></svg><i class="sep"></i>
  <svg class="i"><use href="#v1"/></svg><svg class="i"><use href="#v2"/></svg><svg class="i"><use href="#v3"/></svg><svg class="i"><use href="#v4"/></svg><svg class="i"><use href="#v5"/></svg><svg class="i"><use href="#v6"/></svg><i class="car"></i><svg class="i"><use href="#v7"/></svg><i class="car"></i><svg class="i"><use href="#v8"/></svg><i class="car"></i><svg class="i"><use href="#roles"/></svg><i class="car"></i><i class="sep"></i><span></span><i class="car"></i>
</section>

<main class="work">
  <aside class="rail">
    <div class="cog"><svg><use href="#gearw"/></svg></div>
    <div><svg><use href="#r1"/></svg></div><div><svg><use href="#r2"/></svg></div><div class="cur"><svg><use href="#r3"/></svg></div><div><svg><use href="#r4"/></svg></div><div><svg><use href="#r5"/></svg></div><div><svg><use href="#r6"/></svg></div>
    <div class="gap13"><svg viewBox="0 0 24 24"><circle cx="8" cy="15" r="8" fill="#1c70cc"/><text x="8" y="20" class="info">i</text><path d="M9 4q8 1 10 11M9 1q12 1 14 14" fill="none" stroke="#3868b8" stroke-width="2.400"/></svg></div><div class="gap11"><svg><use href="#r8"/></svg></div><div class="gap12"><svg><use href="#r9"/></svg></div><div><svg><use href="#r10"/></svg></div><div><svg><use href="#r11"/></svg></div><div><svg><use href="#r12"/></svg></div>
  </aside>
  <aside class="panel">
    <div class="ptitle"><span>部件导航器</span><i class="maxbox"></i></div>
    <div class="tree">
      <div class="row head"><span>名称<i class="asc"></i></span><span>最新</span><span>附注</span></div>
      <div class="row top first"><span><i class="ex p"></i><svg class="i"><use href="#mview"/></svg>模型视图</span><span></span><span></span></div>
      <div class="row top"><span><i class="ex p"></i><svg class="ok"><use href="#ok"/></svg><svg class="i"><use href="#cam"/></svg>摄像机</span><span></span><span></span></div>
      <div class="row top"><span><i class="ex p"></i><svg class="ok"><use href="#ok"/></svg><svg class="i"><use href="#draw"/></svg>图纸</span><span></span><span></span></div>
      <div class="row top"><span><i class="ex p"></i><svg class="i"><use href="#folderx"/></svg>用户表达式</span><span></span><span></span></div>
      <div class="row top"><span><i class="ex p"></i><svg class="i"><use href="#folder"/></svg>组</span><span></span><span></span></div>
      <div class="row top lastt"><span><i class="ex"></i><svg class="i"><use href="#folder"/></svg>模型历史记录</span><span></span><span></span></div>
      <div class="row kid"><span><b class="cb"><svg class="ok"><use href="#ok"/></svg></b><svg class="i"><use href="#csys"/></svg>基准坐标系 (0)</span><span><svg class="ok"><use href="#ok"/></svg></span><span></span></div>
      <div class="row kid"><span><b class="cb"><svg class="ok"><use href="#ok"/></svg></b><svg class="i"><use href="#sk"/></svg>草图 (1) "SKETC...</span><span><svg class="ok"><use href="#ok"/></svg></span><span></span></div>
      <div class="row kid"><span><b class="cb"><svg class="ok"><use href="#ok"/></svg></b><svg class="i"><use href="#sk"/></svg>草图 (2) "SKETC...</span><span><svg class="ok"><use href="#ok"/></svg></span><span></span></div>
      <div class="row kid"><span><b class="cb"><svg class="ok"><use href="#ok"/></svg></b><svg class="i"><use href="#sk"/></svg>草图 (3) "SKETC...</span><span><svg class="ok"><use href="#ok"/></svg></span><span></span></div>
      <div class="row kid"><span><b class="cb"><svg class="ok"><use href="#ok"/></svg></b><svg class="i"><use href="#pt"/></svg>点 (4)</span><span><svg class="ok"><use href="#ok"/></svg></span><span></span></div>
      <div class="row kid"><span><b class="cb"><svg class="ok"><use href="#ok"/></svg></b><svg class="i"><use href="#pt"/></svg>点 (5)</span><span><svg class="ok"><use href="#ok"/></svg></span><span></span></div>
      <div class="row kid"><span><b class="cb"><svg class="ok"><use href="#ok"/></svg></b><svg class="i"><use href="#sk"/></svg>草图 (6) "SKETC...</span><span><svg class="ok"><use href="#ok"/></svg></span><span></span></div>
      <div class="row kid end"><span><b class="cb"><svg class="ok"><use href="#ok"/></svg></b><svg class="i"><use href="#sweep"/></svg>扫掠 (8)</span><span><svg class="ok"><use href="#ok"/></svg></span><span></span></div>
      <div class="row"><span></span><span></span><span></span></div><div class="row"><span></span><span></span><span></span></div><div class="row"><span></span><span></span><span></span></div><div class="row"><span></span><span></span><span></span></div><div class="row"><span></span><span></span><span></span></div><div class="row"><span></span><span></span><span></span></div><div class="row"><span></span><span></span><span></span></div><div class="row"><span></span><span></span><span></span></div><div class="row"><span></span><span></span><span></span></div><div class="row"><span></span><span></span><span></span></div><div class="row"><span></span><span></span><span></span></div><div class="row"><span></span><span></span><span></span></div>
      <div class="hbar"><svg viewBox="0 0 20 20"><path d="M12 5l-5 5 5 5" fill="none" stroke="#444" stroke-width="2"/></svg><i></i><svg viewBox="0 0 20 20"><path d="M8 5l5 5-5 5" fill="none" stroke="#444" stroke-width="2"/></svg></div>
    </div>
    <div class="splitter"></div>
    <div class="fold"><span>相关性</span><svg><use href="#vchev"/></svg></div>
    <div class="fold"><span>细节</span><svg><use href="#vchev"/></svg></div>
    <div class="fold"><span>预览</span><svg><use href="#vchev"/></svg></div>
  </aside>
  <section class="doc">
    <div class="doctabs"><div class="doctab"><svg class="i"><use href="#prt"/></svg><span>_model1.prt</span><svg class="pg"><use href="#page"/></svg><svg class="pg"><use href="#xx"/></svg></div></div>
    <svg class="scene" viewBox="416 230 1504 777">
      <defs>
        <linearGradient id="fL" x1="850" y1="450" x2="915" y2="590" gradientUnits="userSpaceOnUse"><stop offset="0" stop-color="#6a4000"/><stop offset=".5" stop-color="#855000"/><stop offset="1" stop-color="#a86600"/></linearGradient>
        <linearGradient id="fM" x1="936" y1="0" x2="978" y2="0" gradientUnits="userSpaceOnUse"><stop offset="0" stop-color="#ad6900"/><stop offset=".5" stop-color="#c47600"/><stop offset="1" stop-color="#dc8600"/></linearGradient>
        <linearGradient id="fR" x1="0" y1="390" x2="0" y2="740" gradientUnits="userSpaceOnUse"><stop offset="0" stop-color="#8f5800"/><stop offset=".2" stop-color="#c77a00"/><stop offset=".5" stop-color="#f08f00"/><stop offset="1" stop-color="#ffa600"/></linearGradient>
        <linearGradient id="fS" x1="0" y1="590" x2="0" y2="840" gradientUnits="userSpaceOnUse"><stop offset="0" stop-color="#f09000"/><stop offset=".45" stop-color="#d88400"/><stop offset="1" stop-color="#b87000"/></linearGradient>
        <linearGradient id="fBL" x1="905" y1="640" x2="965" y2="640" gradientUnits="userSpaceOnUse"><stop offset="0" stop-color="#c07800"/><stop offset=".35" stop-color="#a86800"/><stop offset="1" stop-color="#d88600"/></linearGradient>
        <linearGradient id="fBL2" x1="925" y1="650" x2="950" y2="845" gradientUnits="userSpaceOnUse"><stop offset="0" stop-color="#e08a00" stop-opacity="0"/><stop offset=".5" stop-color="#e88c00" stop-opacity=".75"/><stop offset=".8" stop-color="#ff9c08"/><stop offset="1" stop-color="#ffa818"/></linearGradient>
        <linearGradient id="fBR" x1="945" y1="600" x2="1050" y2="830" gradientUnits="userSpaceOnUse"><stop offset="0" stop-color="#d08000"/><stop offset=".35" stop-color="#ff9d04"/><stop offset=".6" stop-color="#ffbb14"/><stop offset=".85" stop-color="#fff034"/><stop offset="1" stop-color="#ffff40"/></linearGradient>
      </defs>
      <g stroke-linejoin="round">
        <path d="M1029.500 381.500Q1002 415 988 450 978 485 978 527C978 572 987 606 1009 650 1033 692 1065 724 1104.500 745L1104 803Q1060 760 1030 713C1000 668 982 610 976 575Q968 535 970 495C971 465 976 445 985 422z" fill="url(#fR)"/>
        <path d="M941.500 459L985 422C976 445 971 465 970 495Q968 535 976 575 960 586 941 588C937 560 935 540 934 512Q932 475 941.500 459z" fill="url(#fM)"/>
        <path d="M792 446C838 472 880 520 900 573L906 587Q922 592 941 588C937 560 935 540 934 512Q932 475 941.500 459z" fill="url(#fL)"/>
        <path d="M900 573Q908 610 908.500 650C907 685 902 707 893 727 886 748 876 768 866 782L865 841C889 790 908 730 912 690Q916 640 906 587z" fill="url(#fS)"/>
        <path d="M906 587Q916 640 912 690C908 730 889 790 865 841L983.500 852Q966 730 941 588 922 592 906 587z" fill="url(#fBL)"/>
        <path d="M906 587Q916 640 912 690C908 730 889 790 865 841L983.500 852Q966 730 941 588 922 592 906 587z" fill="url(#fBL2)"/>
        <path d="M941 588Q966 730 983.500 852L1104 803Q1060 760 1030 713C1000 668 982 610 976 575 960 586 941 588 941 588z" fill="url(#fBR)"/>
        <path d="M879 368l150.500 13.500L941.500 459 792 446z" fill="#ffbf00"/>
        <path d="M879 368l150.500 13.500L941.500 459 792 446zM792 446C838 472 880 520 900 573M941.500 459Q932 475 934 512C935 540 937 560 941 588Q966 730 983.500 852M985 422C976 445 971 465 970 495Q968 535 976 575C982 610 1000 668 1030 713Q1060 760 1104 803M900 573Q902 584 906 587 922 592 941 588 966 583 981 569M906 587Q916 640 912 690C908 730 889 790 865 841l118.500 11L1104 803l.5-58C1065 724 1033 692 1009 650M865 841l1-59C876 768 886 748 893 727" fill="none" stroke="#2c2410" stroke-width="1"/>
      </g>
      <g>
        <path d="M476 920l12-12 21 2 4 22-13 9-21-1zM476 920l24 2 9-12M500 922v19M488 908l4 22" fill="#bbb" fill-opacity=".25" stroke="#aaa"/>
        <path d="M479 942l29-25" stroke="#a8cca8" stroke-width="2"/>
        <path d="M478 940l-5-26" stroke="#1030b0" stroke-width="3"/><path d="M471.500 904l5.500 11-8.500 1z" fill="#1030b0"/>
        <path d="M479 942l26 2" stroke="#c02020" stroke-width="3"/><path d="M515 944.500l-11-3v6z" fill="#c02020"/>
        <circle cx="478.500" cy="942" r="3.500" fill="#d8d8d8" stroke="#888" stroke-width=".6"/>
        <text x="466.500" y="903" font-size="12" fill="#4468f0">Z</text><text x="516" y="949" font-size="12" fill="#e04040">X</text>
      </g>
    </svg>
  </section>
</main>
<footer class="status"><svg class="i"><use href="#flag"/></svg><svg class="i"><use href="#full"/></svg></footer>
<svg class="mark" viewBox="0 0 270 86">
  <path d="M36 0l36 20-5 40-31 21L0 62V20z" fill="#a4d8f2"/>
  <path d="M36 0l15 9q8 12 6 22L36 19q-8-6-22-6z" fill="#cbe6f4"/><path d="M51 8l21 12v42l-14-12V31q0-13-7-23z" fill="#7fcaf0"/><path d="M72 41v21L36 82 18 55q18 13 28 7 18-4 26-21z" fill="#74bfe6"/><path d="M17 53q1 16 19 29L0 62z" fill="#86d2f6"/>
  <path d="M36 19l20 11v23L36 64 16 53V30z" fill="#e6e8ea"/><path d="M20 33l16-9 16 9-16 9z" fill="#b0dcf2"/><path d="M20 33l16 9v18l-16-9z" fill="#96cfee"/><path d="M52 33l-16 9v18l16-9z" fill="#70bee6"/>
  <path d="M14 13q14 0 22 6M51 9q7 10 7 22M72 41q-8 17-26 21M18 55q2 14 18 26M0 52q4-14 16-20" fill="none" stroke="#e6e8ea" stroke-width="1.500"/>
  <g fill="#f4f5f6"><text x="80" y="47" font-size="41" font-weight="bold" textLength="178" lengthAdjust="spacingAndGlyphs" class="wm">3D世界网</text><text x="82" y="68" font-size="12.500" font-weight="bold" textLength="174" lengthAdjust="spacingAndGlyphs" class="wm">WWW.3DSJW.COM</text></g>
</svg>
</body>
</html>
```
FILE: styles.css
```css
* { box-sizing: border-box; }
body {
  margin: 0;
  width: 1920px;
  height: 1029px;
  overflow: hidden;
  background: #fff;
  color: #1e1e1e;
  font: 14px/18px "Noto Sans", "Noto Sans CJK SC", sans-serif;
  display: flex;
  flex-direction: column;
  position: relative;
}
p { margin: 0; }
i, b { font-style: normal; }
.sprite { position: absolute; width: 0; height: 0; }
.i { width: 16px; height: 16px; flex: none; display: block; }
.sep { width: 1px; height: 24px; background: #d4d4d4; flex: none; }
.car {
  width: 0; height: 0; flex: none;
  border: 4px solid transparent;
  border-top: 4px solid #1a1a1a;
  border-bottom: 0;
}
.car.up { border-top: 0; border-bottom: 4px solid #aaa; }
.car.bar { position: relative; }
.car.bar::before { content: ""; position: absolute; left: -4px; top: -7px; width: 8px; height: 1px; background: #1a1a1a; }
.car.big-c { border-width: 5px 5px 0; }

/* lettering inside dimension icons */
.t { font: 7px "Liberation Sans", sans-serif; text-anchor: middle; }
.s { font: 5.5px "Liberation Sans", sans-serif; text-anchor: middle; }
.dark { fill: #111; }
.red { fill: #b01818; }
.grey { fill: #777; }
.blue { fill: #2020a8; }
.info { font: bold 14px "Liberation Serif", serif; fill: #fff; text-anchor: middle; }

/* title bar */
.title { height: 30px; flex: none; display: flex; align-items: center; position: relative; overflow: hidden; }
.quick {
  width: 482px; height: 30px; display: grid; align-items: center; justify-items: center;
  grid-template-columns: 45px 4px 30px 1px 26px 13px 24px 5px 24px 23px 23px 24px 3px 25px 14px 7px 22px 7px 21px 59px 26px 28px 14px 14px;
}
.nx { color: #7f9aab; font: bold 23px "Liberation Sans", sans-serif; -webkit-text-stroke: .6px #7f9aab; }
.caption { font-size: 15.3px; width: 120px; margin-left: 573px; text-align: center; white-space: nowrap; }
.brand { color: #099; font: bold 15px "Open Sans", sans-serif; width: 72px; margin-left: 564px; letter-spacing: .3px; -webkit-text-stroke: .5px #099; }
.winbtns { display: flex; gap: 14px; margin-left: 24px; }
.sun { position: absolute; left: 1311px; top: -83px; width: 88px; height: 88px; border-radius: 50%; background: #fbdc98; box-shadow: 0 0 4px #ccc; }

/* ribbon tabs */
.tabs { height: 32px; flex: none; background: #dcdcdc; display: flex; align-items: center; font-size: 16px; gap: 26px; }
.tabs > span { white-space: nowrap; line-height: 32px; }
.tabs .file { width: 91px; background: #569fb7; color: #fff; text-align: center; margin-right: -25px; padding-right: 2px; }
.tabs .on { width: 59px; height: 31px; margin: 1px -13px 0 0; background: #fff; border-top: 1px solid #a8a8a8; color: #14657f; text-align: center; line-height: 30px; }
.find { width: 157px; height: 24px; margin-left: auto; background: #fff; border: 1px solid #999; display: flex; align-items: center; justify-content: space-between; padding: 0 3px 0 1px; font-size: 14px; color: #a0a0a0; }
.tabtools { display: flex; gap: 10px; margin: 0 9px 0 -15px; }
.help { width: 14px; height: 14px; margin: 1px; border-radius: 50%; background: linear-gradient(#7ca4ec, #2c5cc0); color: #fff; font: bold 11px/14px "Liberation Sans", sans-serif; text-align: center; }

/* ribbon groups */
.ribbon { height: 106px; flex: none; display: flex; border-bottom: 1px solid #d0d0d0; }
.grp { flex: none; padding-top: 2px; display: flex; flex-direction: column; background: linear-gradient(#d8d8d8, #d8d8d8) right 4px / 1px 97px no-repeat; }
.body, .mini { height: 83px; display: grid; justify-content: start; }
.foot { height: 20px; display: flex; align-items: center; color: #14657f; white-space: nowrap; }
.foot span { flex: 1; text-align: center; }
.foot .car { margin: 0 10px 0 7px; }
.w-sketch { width: 200px; } .w-sketch .body { grid-template-columns: 57px 117px 20px; }
.w-feat { width: 411px; } .w-feat .body { padding-left: 8px; grid-template-columns: 64px 40px 39px 89px 50px 72px 50px; }
.w-sync { width: 193px; } .w-sync .body { padding-left: 6px; grid-template-columns: 55px 89px 38px; }
.w104 { width: 104px; } .w52 { width: 52px; } .w58 { width: 58px; } .w98 { width: 98px; } .w29 { width: 29px; } .w288 { width: 288px; }
.w43 { width: 43px; } .w43 .body { grid-template-columns: 42px; }
.w-asm { width: 205px; } .w-asm .body { padding-left: 6px; grid-template-columns: 68px 36px 90px; }
.w55 { width: 55px; } .w55 .body { grid-template-columns: 55px; }
.rest { width: 132px; background: none; } .rest .foot { margin-top: 83px; justify-content: flex-end; } .rest .foot .car { margin-right: 7px; }
.big { padding-top: 3px; display: flex; flex-direction: column; align-items: center; white-space: nowrap; min-width: 0; }
.L { width: 31px; height: 32px; flex: none; }
.big span { height: 18px; margin-top: 6px; }
.w-sketch .big { padding-left: 1px; }
.big .car { margin-top: 6px; }
.big.off { color: #b8b8b8; }
.more { padding-top: 2px; }
.more div { width: 38px; height: 34px; border: 1px solid #d6d6d6; border-radius: 2px; display: flex; align-items: center; justify-content: center; }
.more span { margin-top: 5px; }
.list { display: flex; flex-direction: column; padding-left: 7px; }
.list p { height: 26px; display: flex; align-items: center; gap: 5px; white-space: nowrap; }
.list .car { margin-left: 1px; }
.w-feat .list + .big + .list { padding-left: 5px; }
.w-feat .more { width: 38px; margin-left: 6px; }
.w-sync .list { padding-left: 2px; } .w-sync .list p { gap: 4px; }
.w-asm .list { padding-left: 7px; }
.gallery { margin-top: 3px; height: 78px; border: 1px solid #c8c8c8; display: grid; grid-template-columns: repeat(3, 39px); grid-template-rows: 34px 48px; place-items: center; place-content: center; }
.gallery svg { width: 26px; height: 26px; }
.scroll { display: flex; flex-direction: column; align-items: center; padding-top: 14px; gap: 21px; }
.scroll .bar { margin-top: 2px; }
.mini { padding: 8px 0 0 7px; grid-auto-rows: 24px; row-gap: 7px; align-content: start; }
.mini p { display: flex; align-items: center; gap: 7px; }
.mini .sep { margin: 0 -1px; }

/* selection bar */
.selbar {
  height: 36px; flex: none; border-bottom: 1px solid #8c8c8c; padding-left: 5px;
  display: grid; align-items: center; justify-items: center; white-space: nowrap;
  grid-template-columns: 25px 52px 14px 7px 176px 185px 29px 24px 22px 14px 25px 25px 25px 24px 14px 29px 24px repeat(14, 25px) 12px 27px 24px 24px 26px 24px 27px 13px 25px 15px 27px 13px 25px 14px 17px 1fr 22px;
}
.selbar .sep { height: 28px; }
.selbar .hl { box-sizing: content-box; padding: 3px; background: #cfe8ee; border: 1px solid #a4cdd8; }
.combo { justify-self: end; height: 24px; border: 1px solid #a0a0a0; display: flex; align-items: center; justify-content: space-between; padding: 0 6px 0 2px; }
.c1 { width: 167px; } .c2 { width: 176px; }

/* work area */
.work { height: 804px; flex: none; display: flex; border-bottom: 1px solid #a0a0a0; }
.rail { width: 32px; background: #dcdcdc; border-right: 1px solid #a4a4a4; display: flex; flex-direction: column; }
.rail div { width: 35px; height: 42px; display: flex; align-items: center; justify-content: center; }
.rail svg { width: 22px; height: 22px; }
.rail .cog { height: 24px; margin-bottom: 18px; }
.rail .cog svg { width: 20px; height: 20px; }
.rail .cur { background: #fff; width: 30px; margin: -2px 0 -2px 2px; height: 46px; border: 1px solid #a4a4a4; border-right: 0; }
.rail .gap13 { margin-top: 13px; } .rail .gap11 { margin-top: 11px; } .rail .gap12 { margin-top: 12px; }
.panel { width: 384px; border-right: 1px solid #909090; padding: 0 10px 0 6px; font-size: 15px; }
.ptitle { height: 31px; display: flex; align-items: center; justify-content: space-between; padding: 0 6px 0 4px; }
.maxbox { width: 14px; height: 13px; border: 1px solid #222; border-top-width: 2px; margin-top: 4px; }
.tree { border: 1px solid #c8c8c8; border-bottom: 0; height: 677px; padding: 1px 1px 0; }
.row { display: grid; grid-template-columns: 200px 100px 1fr; height: 24px; }
.row > span { display: flex; align-items: center; border-right: 1px solid #e4e4e4; border-bottom: 1px solid #ececec; white-space: nowrap; min-width: 0; padding-bottom: 1px; }
.row > span:last-child { border-right: 0; }
.row:nth-child(odd) { background: #fafafa; }
.row.head { background: #efefef; }
.row.head > span { border-right-color: #ccc; border-bottom-color: #ccc; padding-left: 6px; }
.asc { border: 6px solid transparent; border-top: 0; border-bottom: 6px solid #111; margin-left: 18px; }
.row.top > span:first-child { padding-left: 5px; background: repeating-linear-gradient(#999 0 1px, transparent 1px 3px) 9px 0 / 1px 100% no-repeat; }
.row.first > span:first-child { background-position: 9px 12px; }
.row.lastt > span:first-child { background-size: 1px 10px; }
.ex { width: 11px; height: 11px; flex: none; margin: 0 4px 0 -1px; border: 1px solid #d0d0d0; background: linear-gradient(#111, #111) center / 7px 1px no-repeat #fff; }
.ex.p { background: linear-gradient(#111, #111) center / 7px 1px no-repeat, linear-gradient(#111, #111) center / 1px 7px no-repeat, #fff; }
.ok { width: 14px; height: 14px; flex: none; }
.row .i { margin-right: 3px; }
.row.top .ok { margin: 0 1px; }
.kid > span:first-child { padding-left: 40px; color: #9a9a9a; letter-spacing: .3px;
  background: repeating-linear-gradient(#999 0 1px, transparent 1px 3px) 28px 0 / 1px 100% no-repeat, repeating-linear-gradient(90deg, #999 0 1px, transparent 1px 3px) 28px 12px / 11px 1px no-repeat; }
.kid.end > span:first-child { background-size: 1px 12px, 11px 1px; color: #111; font-weight: bold; }
.kid > span:nth-child(2) { padding-left: 5px; }
.cb { width: 12px; height: 12px; border: 1px solid #111; background: #fff; margin-right: 2px; flex: none; display: flex; align-items: center; justify-content: center; }
.cb .ok { width: 12px; height: 12px; }
.hbar { height: 19px; margin-top: 5px; background: #f0f0f0; display: flex; justify-content: space-between; align-items: center; }
.hbar svg { width: 20px; height: 19px; }
.hbar i { width: 292px; height: 19px; background: #cdcdcd; margin-right: auto; margin-left: 1px; }
.splitter { height: 5px; background: #dadada; border-top: 1px solid #9c9c9c; border-bottom: 1px solid #9c9c9c; }
.fold { height: 28px; border-bottom: 2px solid #d0d0d0; display: flex; align-items: center; justify-content: space-between; padding: 0 5px 0 7px; color: #14657f; font-size: 18px; }
.fold svg { width: 15px; height: 12px; }
.doc { flex: 1; display: flex; flex-direction: column; }
.doctabs { height: 26px; border-bottom: 2px solid #569fb7; }
.doctab { width: 153px; height: 24px; background: #569fb7; color: #fff; display: flex; align-items: center; padding-left: 5px; font-size: 15.6px; }
.doctab span { margin-left: 4px; letter-spacing: .15px; }
.doctab .pg { width: 12px; height: 12px; margin-left: 6px; }
.doctab .pg + .pg { margin-left: 4px; }
.scene { display: block; width: 1504px; height: 777px; background: linear-gradient(#b4b5b7, #e6e8ea 75%, #e8eaeb); }
.status { height: 21px; display: flex; justify-content: flex-end; gap: 4px; padding: 2px 55px 0 0; }
.mark { position: absolute; left: 1637px; top: 934px; width: 270px; height: 86px; opacity: .92; }
.wm { font-family: "Open Sans", "Noto Sans CJK SC", sans-serif; }
```
